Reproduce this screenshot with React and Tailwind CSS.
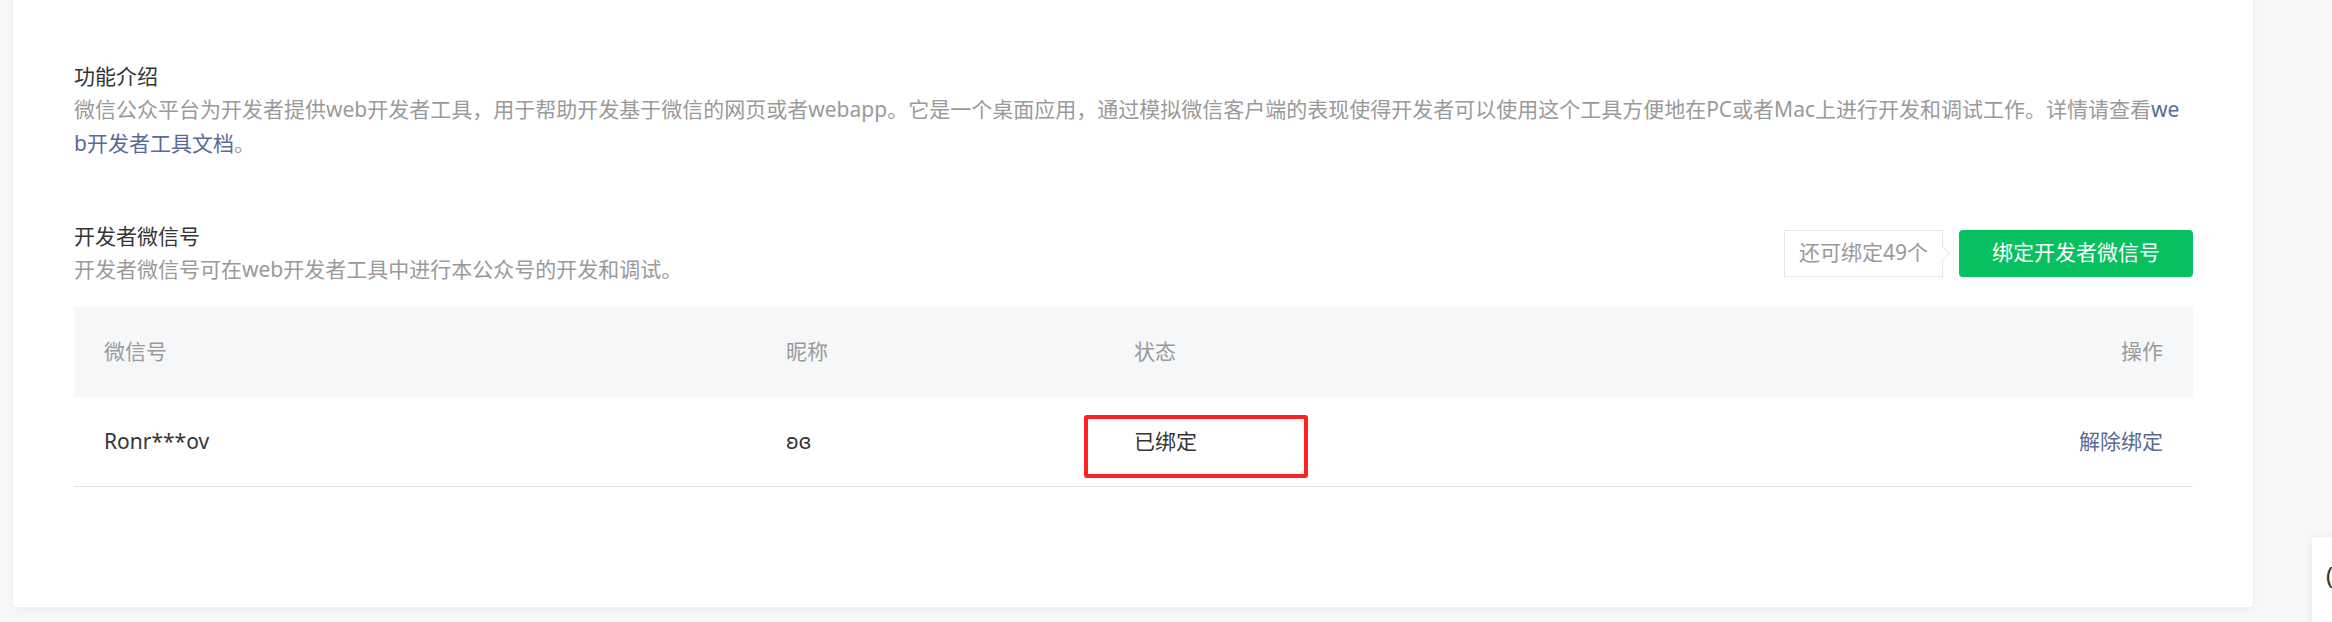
import React from 'react';

/**
 * Developer tools settings panel
 * Shows the intro text, the bound developer WeChat accounts and the bind button.
 */
const developers = [
  { id: 'Ronr***ov', nickname: 'ʚɞ', status: '已绑定' },
];

const App = () => {
  const remaining = 49;

  return (
    <div
      className="relative w-full h-[622px] bg-[#f6f7f9] overflow-hidden"
      style={{ fontFamily: '"Noto Sans", "Noto Sans CJK SC", sans-serif' }}
    >
      {/* Main card */}
      <div className="ml-[13px] -mt-1 w-[2240px] h-[611px] bg-white rounded-[4px] shadow-[0_2px_6px_rgba(0,0,0,0.05)] pt-[64px] pl-[61px] pr-[60px]">
        {/* Intro */}
        <section>
          <h3 className="text-[21px] leading-[32px] text-[#353535] font-normal">功能介绍</h3>
          <p className="pr-[11px] text-[21px] leading-[34px] text-[#9a9a9a] break-all">
            微信公众平台为开发者提供web开发者工具，用于帮助开发基于微信的网页或者webapp。它是一个桌面应用，通过模拟微信客户端的表现使得开发者可以使用这个工具方便地在PC或者Mac上进行开发和调试工作。详情请查看
            <a className="text-[#576b95] cursor-pointer">web开发者工具文档</a>。
          </p>
        </section>

        {/* Developer accounts */}
        <section className="mt-[60px]">
          <div className="flex items-center justify-between">
            <div>
              <h3 className="text-[21px] leading-[32px] text-[#353535] font-normal">开发者微信号</h3>
              <p className="text-[21px] leading-[34px] text-[#9a9a9a]">
                开发者微信号可在web开发者工具中进行本公众号的开发和调试。
              </p>
            </div>
            <div className="flex items-center gap-4">
              <div className="relative h-[47px] px-[14px] flex items-center border border-[#e4e6eb] bg-white text-[21px] text-[#9a9a9a]">
                还可绑定{remaining}个
                <span className="absolute -right-[6px] top-[17px] w-[11px] h-[11px] bg-white border-t border-r border-[#e4e6eb] rotate-45" />
              </div>
              <button className="h-[47px] px-[33px] bg-[#07c160] text-white text-[21px] rounded-[4px]">
                绑定开发者微信号
              </button>
            </div>
          </div>

          {/* Table */}
          <div className="mt-[21px] text-[21px]">
            <div className="flex items-center h-[90px] bg-[#f6f7f9] text-[#9a9a9a]">
              <div className="w-[682px] pl-[30px]">微信号</div>
              <div className="w-[348px] pl-[30px]">昵称</div>
              <div className="flex-1 pl-[30px]">状态</div>
              <div className="w-[200px] pr-[30px] text-right">操作</div>
            </div>
            {developers.map((dev) => (
              <div key={dev.id} className="relative flex items-center h-[90px] border-b border-[#e5e5e5] text-[#353535]">
                <div className="w-[682px] pl-[30px]">{dev.id}</div>
                <div className="w-[348px] pl-[30px]">{dev.nickname}</div>
                <div className="flex-1 pl-[30px]">{dev.status}</div>
                <div className="w-[200px] pr-[30px] text-right text-[#576b95] cursor-pointer">解除绑定</div>
                {/* annotation box */}
                <div className="absolute left-[1010px] top-[18px] w-[224px] h-[63px] border-4 border-[#ff2020] rounded-[3px]" />
              </div>
            ))}
          </div>
        </section>
      </div>

      {/* Floating side widget, cut off at the edge */}
      <div className="absolute left-[2312px] top-[537px] w-[60px] h-[120px] bg-white rounded-tl-[4px] shadow-[0_0_8px_rgba(0,0,0,0.06)] pl-[14px] pt-[20px] text-[24px] text-[#353535]">
        (
      </div>
    </div>
  );
};

export default App;
